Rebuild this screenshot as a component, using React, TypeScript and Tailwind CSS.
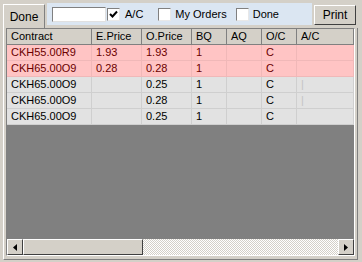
import React from 'react';

const cols = [
  { name: 'Contract', w: 'w-[85px]' },
  { name: 'E.Price', w: 'w-[50px]' },
  { name: 'O.Price', w: 'w-[50px]' },
  { name: 'BQ', w: 'w-[35px]' },
  { name: 'AQ', w: 'w-[35px]' },
  { name: 'O/C', w: 'w-[35px]' },
  { name: 'A/C', w: 'flex-1' },
];

const rows = [
  { c: 'CKH55.00R9', e: '1.93', o: '1.93', bq: '1', aq: '', oc: 'C', ac: '', hot: true },
  { c: 'CKH65.00O9', e: '0.28', o: '0.28', bq: '1', aq: '', oc: 'C', ac: '', hot: true },
  { c: 'CKH65.00O9', e: '', o: '0.25', bq: '1', aq: '', oc: 'C', ac: '|', hot: false },
  { c: 'CKH65.00O9', e: '', o: '0.28', bq: '1', aq: '', oc: 'C', ac: '|', hot: false },
  { c: 'CKH65.00O9', e: '', o: '0.25', bq: '1', aq: '', oc: 'C', ac: '', hot: false },
];

const Check = ({ checked }: { checked?: boolean }) => (
  <span className="w-[13px] h-[13px] bg-white border border-t-[#808080] border-l-[#808080] border-r-[#e8e8e8] border-b-[#e8e8e8] flex items-center justify-center">
    {checked && (
      <svg width="9" height="9" viewBox="0 0 9 9">
        <path d="M1 4 L3.5 6.5 L8 1.5" stroke="#000" strokeWidth="2" fill="none" />
      </svg>
    )}
  </span>
);

export default function App() {
  return (
    <div className="w-[362px] h-[262px] bg-[#d4d0c8] text-[11px] text-black overflow-hidden" style={{ fontFamily: '"Liberation Sans", Arial, sans-serif' }}>
      {/* toolbar */}
      <div className="h-[28px] flex items-end relative">
        <div className="ml-[3px] w-[42px] h-[24px] border-l border-t border-r border-l-white border-t-white border-r-[#808080] flex items-center justify-center bg-[#d4d0c8] text-[12px] z-10">
          Done
        </div>
        <div className="absolute left-[47px] top-[3px] w-[265px] h-[22px] bg-[#dbe6f2] flex items-center">
          <div className="ml-[5px] w-[54px] h-[15px] bg-white border border-t-[#808080] border-l-[#808080] border-r-[#e0e0e0] border-b-[#e0e0e0]" />
          <div className="ml-[1px] flex items-center gap-[5px]">
            <Check checked />
            <span className="text-[11px]">A/C</span>
          </div>
          <div className="ml-[15px] flex items-center gap-[4px]">
            <Check />
            <span className="text-[11px]">My Orders</span>
          </div>
          <div className="ml-[9px] flex items-center gap-[4px]">
            <Check />
            <span className="text-[11px]">Done</span>
          </div>
        </div>
        <div className="absolute left-[314px] top-[5px] w-[42px] h-[20px] border border-t-white border-l-white border-r-[#404040] border-b-[#404040] flex items-center justify-center text-[12px]">
          Print
        </div>
      </div>

      {/* panel */}
      <div className="ml-[3px] mr-[4px] h-[232px] border-l border-l-white border-r border-r-[#808080] border-b border-b-[#808080] pl-[2px] pr-[2px] pb-[3px]">
        <div className="h-[228px] border border-t-[#808080] border-l-[#808080] border-r-white border-b-white bg-[#808080] flex flex-col">
          <div className="flex h-[16px] bg-[#d4d0c8]">
            {cols.map((c) => (
              <div key={c.name} className={`${c.w} border-r border-r-[#808080] border-b border-b-[#808080] pl-[4px] leading-[15px] text-[11px]`}>
                {c.name}
              </div>
            ))}
          </div>
          {rows.map((r, i) => {
            const vals = [r.c, r.e, r.o, r.bq, r.aq, r.oc, r.ac];
            return (
              <div key={i} className={`flex h-[16px] ${r.hot ? 'bg-[#ffc4c4] text-[#6b0000]' : 'bg-[#e2e2e2] text-black'}`}>
                {vals.map((v, j) => (
                  <div key={j} className={`${cols[j].w} border-r ${r.hot ? 'border-r-[#f0b8b8] border-b-[#f0b8b8]' : 'border-r-[#cfcfcf] border-b-[#cfcfcf]'} border-b pl-[4px] leading-[15px] text-[11px] ${j === 6 ? 'text-[#c4c4c4]' : ''}`}>
                    {v}
                  </div>
                ))}
              </div>
            );
          })}
          <div className="flex-1" />
          {/* horizontal scrollbar */}
          <div className="h-[16px] flex bg-[#eae8e2]" style={{ backgroundImage: 'repeating-conic-gradient(#ffffff 0 25%, #d4d0c8 0 50%)', backgroundSize: '2px 2px' }}>
            <div className="w-[16px] h-[16px] bg-[#d4d0c8] border border-t-white border-l-white border-r-[#404040] border-b-[#404040] flex items-center justify-center">
              <svg width="4" height="7" viewBox="0 0 4 7"><path d="M4 0 L0 3.5 L4 7Z" fill="#000" /></svg>
            </div>
            <div className="w-[120px] h-[16px] bg-[#d4d0c8] border border-t-white border-l-white border-r-[#404040] border-b-[#404040]" />
            <div className="flex-1" />
            <div className="w-[16px] h-[16px] bg-[#d4d0c8] border border-t-white border-l-white border-r-[#404040] border-b-[#404040] flex items-center justify-center">
              <svg width="4" height="7" viewBox="0 0 4 7"><path d="M0 0 L4 3.5 L0 7Z" fill="#000" /></svg>
            </div>
          </div>
        </div>
      </div>
    </div>
  );
}
